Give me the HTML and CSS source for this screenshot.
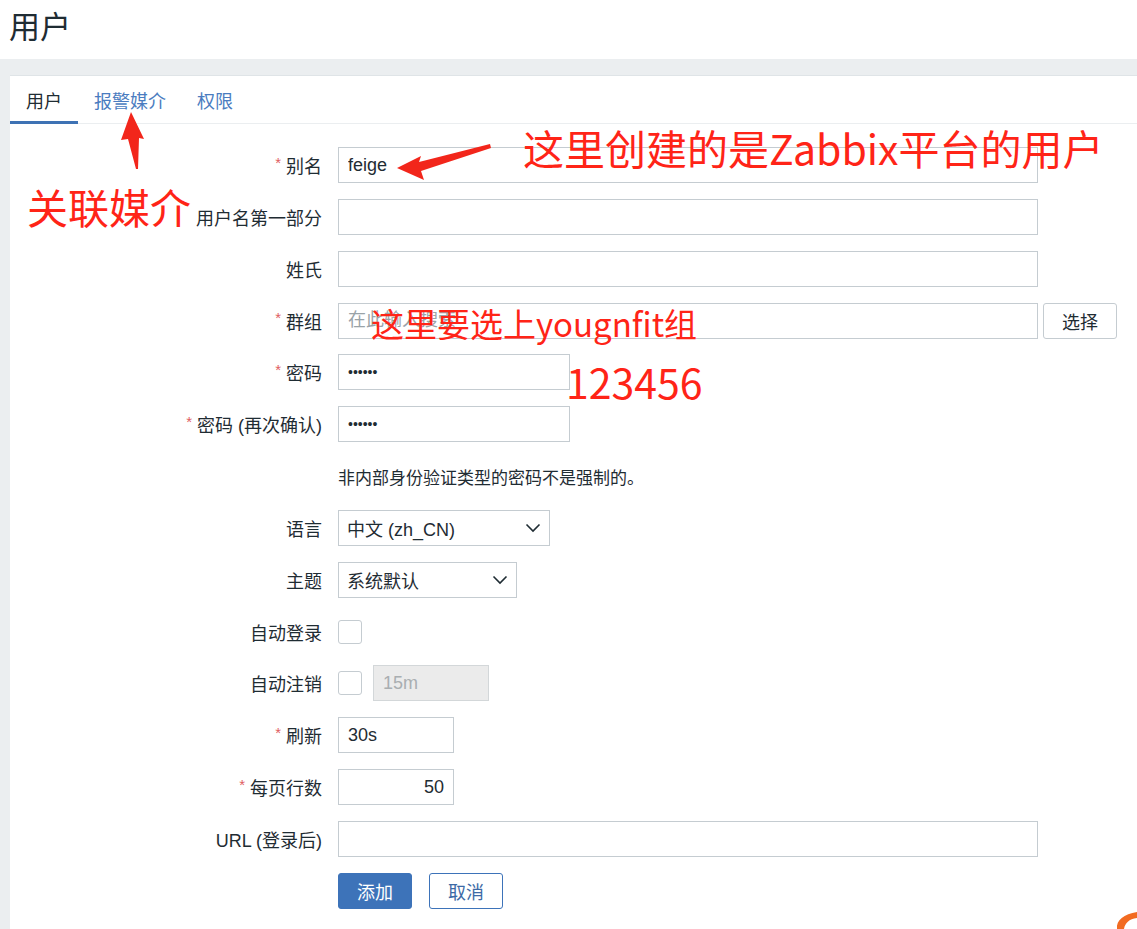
FILE: index.html
```html
<!DOCTYPE html>
<html lang="zh">
<head>
<meta charset="utf-8">
<title>用户</title>
<link rel="stylesheet" href="styles.css">
</head>
<body>
<header class="page-header">
  <h1 class="page-title">用户</h1>
</header>
<main class="page-main">
  <section class="card">
    <nav class="tabs">
      <span class="tab tab-active">用户</span>
      <span class="tab">报警媒介</span>
      <span class="tab">权限</span>
    </nav>
    <form class="form">
      <label class="lbl"><span class="req">*</span>别名</label>
      <div class="ctl"><input class="inp inp-wide" type="text" value="feige"></div>

      <label class="lbl">用户名第一部分</label>
      <div class="ctl"><input class="inp inp-wide" type="text"></div>

      <label class="lbl">姓氏</label>
      <div class="ctl"><input class="inp inp-wide" type="text"></div>

      <label class="lbl"><span class="req">*</span>群组</label>
      <div class="ctl"><input class="inp inp-wide" type="text" placeholder="在此输入搜索"><button type="button" class="btn-select">选择</button></div>

      <label class="lbl"><span class="req">*</span>密码</label>
      <div class="ctl"><input class="inp inp-pass" type="password" value="123456"></div>

      <label class="lbl"><span class="req">*</span>密码 (再次确认)</label>
      <div class="ctl"><input class="inp inp-pass" type="password" value="123456"></div>

      <span class="lbl"></span>
      <div class="ctl hint">非内部身份验证类型的密码不是强制的。</div>

      <label class="lbl">语言</label>
      <div class="ctl"><div class="select sel-lang"><span>中文 (zh_CN)</span><svg class="chev" width="16" height="10" viewBox="0 0 16 10"><path d="M1.5 1.5 L8 8 L14.5 1.5" fill="none" stroke="#1f2c33" stroke-width="1.6"/></svg></div></div>

      <label class="lbl">主题</label>
      <div class="ctl"><div class="select sel-theme"><span>系统默认</span><svg class="chev" width="16" height="10" viewBox="0 0 16 10"><path d="M1.5 1.5 L8 8 L14.5 1.5" fill="none" stroke="#1f2c33" stroke-width="1.6"/></svg></div></div>

      <label class="lbl">自动登录</label>
      <div class="ctl"><span class="chk"></span></div>

      <label class="lbl">自动注销</label>
      <div class="ctl"><span class="chk"></span><input class="inp inp-short inp-disabled" type="text" value="15m" disabled></div>

      <label class="lbl"><span class="req">*</span>刷新</label>
      <div class="ctl"><input class="inp inp-short" type="text" value="30s"></div>

      <label class="lbl"><span class="req">*</span>每页行数</label>
      <div class="ctl"><input class="inp inp-short inp-right" type="text" value="50"></div>

      <label class="lbl">URL (登录后)</label>
      <div class="ctl"><input class="inp inp-wide" type="text"></div>

      <span class="lbl"></span>
      <div class="ctl"><button type="button" class="btn-primary">添加</button><button type="button" class="btn-secondary">取消</button></div>
    </form>
  </section>
</main>

<div class="note note-user">这里创建的是Zabbix平台的用户</div>
<div class="note note-media">关联媒介</div>
<div class="note note-group">这里要选上yougnfit组</div>
<div class="note note-pass">123456</div>

<svg class="arrows" width="1137" height="929" viewBox="0 0 1137 929">
  <polygon points="397,168 421,156 419,162 490,144 491,148 421,171 424,180" fill="#f2261b"/>
  <polygon points="131,112 144,139 139,138 138,169 136,169 128,139 121,140" fill="#f2261b"/>
  <path d="M1117,929 C1116,920 1124,914 1137,912 L1137,918 C1129,919 1125,923 1124,929 Z" fill="#f26b21"/>
</svg>
</body>
</html>
```

FILE: styles.css
```css
html, body {
  margin: 0;
  padding: 0;
}

body {
  background: #ebeef0;
  font-family: "Liberation Sans", "Noto Sans CJK SC", Arial, sans-serif;
  color: #1f2c33;
  position: relative;
  width: 1137px;
  height: 929px;
  overflow: hidden;
}

.page-header {
  background: #ffffff;
  height: 59px;
  display: flex;
  align-items: center;
  padding-left: 9px;
}

.page-title {
  margin: 0;
  font-size: 31px;
  font-weight: normal;
  line-height: 1;
  color: #1f2c33;
  position: relative;
  top: -2px;
}

.page-main {
  padding: 16px 0 0 10px;
}

.card {
  background: #ffffff;
  border-top: 1px solid #dfe4e7;
  height: 860px;
}

.tabs {
  display: flex;
  height: 47px;
  border-bottom: 1px solid #ebeef0;
}

.tab {
  display: flex;
  align-items: center;
  padding: 0 16px;
  font-size: 18px;
  color: #4a7cc0;
  border-bottom: 3px solid transparent;
  margin-bottom: -1px;
  padding-top: 2px;
}

.tab + .tab + .tab {
  padding-left: 15px;
}

.tab-active {
  color: #1f2c33;
  border-bottom-color: #3e72b4;
}

.form {
  display: grid;
  grid-template-columns: 312px 1fr;
  grid-auto-rows: 36px;
  column-gap: 16px;
  row-gap: 15.85px;
  padding-top: 23px;
}

.lbl {
  display: flex;
  align-items: center;
  justify-content: flex-end;
  font-size: 18px;
  color: #1f2c33;
  white-space: nowrap;
}

.req {
  color: #e0605f;
  font-size: 15px;
  margin-right: 5px;
  position: relative;
  top: -3px;
}

.ctl {
  display: flex;
  align-items: center;
  gap: 5px;
}

.inp {
  box-sizing: border-box;
  height: 36px;
  border: 1px solid #c5ccd1;
  border-radius: 0;
  padding: 0 9px;
  font-family: "Liberation Sans", "Noto Sans CJK SC", Arial, sans-serif;
  font-size: 18px;
  color: #1f2c33;
  background: #ffffff;
  outline: none;
  margin: 0;
}

.inp::placeholder {
  color: #9aa3a8;
}

.inp-wide {
  width: 700px;
}

.inp-pass {
  width: 232px;
  font-size: 14px;
  letter-spacing: 0;
}

.inp-short {
  width: 116px;
}

.inp-right {
  text-align: right;
}

.inp-disabled {
  background: #ebebeb;
  color: #a9aeb1;
  margin-left: 6px;
  border-color: #d3d7d9;
}

.btn-select {
  box-sizing: border-box;
  height: 36px;
  width: 74px;
  background: #ffffff;
  border: 1px solid #c5ccd1;
  border-radius: 3px;
  font-family: "Liberation Sans", "Noto Sans CJK SC", Arial, sans-serif;
  font-size: 18px;
  color: #1f2c33;
  padding: 0;
}

.hint {
  font-size: 17px;
  color: #1f2c33;
}

.select {
  box-sizing: border-box;
  height: 36px;
  border: 1px solid #c5ccd1;
  background: #ffffff;
  display: flex;
  align-items: center;
  justify-content: space-between;
  padding: 0 8px 0 8px;
  font-size: 18px;
  color: #1f2c33;
}

.sel-lang {
  width: 212px;
}

.sel-theme {
  width: 179px;
}

.chev {
  display: block;
}

.chk {
  box-sizing: border-box;
  width: 24px;
  height: 24px;
  border: 1px solid #c5ccd1;
  border-radius: 3px;
  background: #ffffff;
}

.btn-primary,
.btn-secondary {
  box-sizing: border-box;
  height: 36px;
  width: 74px;
  border-radius: 3px;
  font-family: "Liberation Sans", "Noto Sans CJK SC", Arial, sans-serif;
  font-size: 18px;
  padding: 0;
}

.btn-primary {
  background: #3d73b9;
  border: 1px solid #3d73b9;
  color: #ffffff;
}

.btn-secondary {
  background: #ffffff;
  border: 1px solid #3d73b9;
  color: #3d6aa6;
  margin-left: 12px;
}

.note {
  position: absolute;
  color: #ff2417;
  font-family: "Noto Sans CJK SC", "Liberation Sans", sans-serif;
  line-height: 1;
  white-space: nowrap;
}

.note-user {
  left: 523px;
  top: 127px;
  font-size: 41px;
}

.note-media {
  left: 27px;
  top: 186px;
  font-size: 41px;
}

.note-group {
  left: 371px;
  top: 307px;
  font-size: 33px;
}

.note-pass {
  left: 566px;
  top: 361px;
  font-size: 41px;
}

.arrows {
  position: absolute;
  left: 0;
  top: 0;
  pointer-events: none;
}
```
